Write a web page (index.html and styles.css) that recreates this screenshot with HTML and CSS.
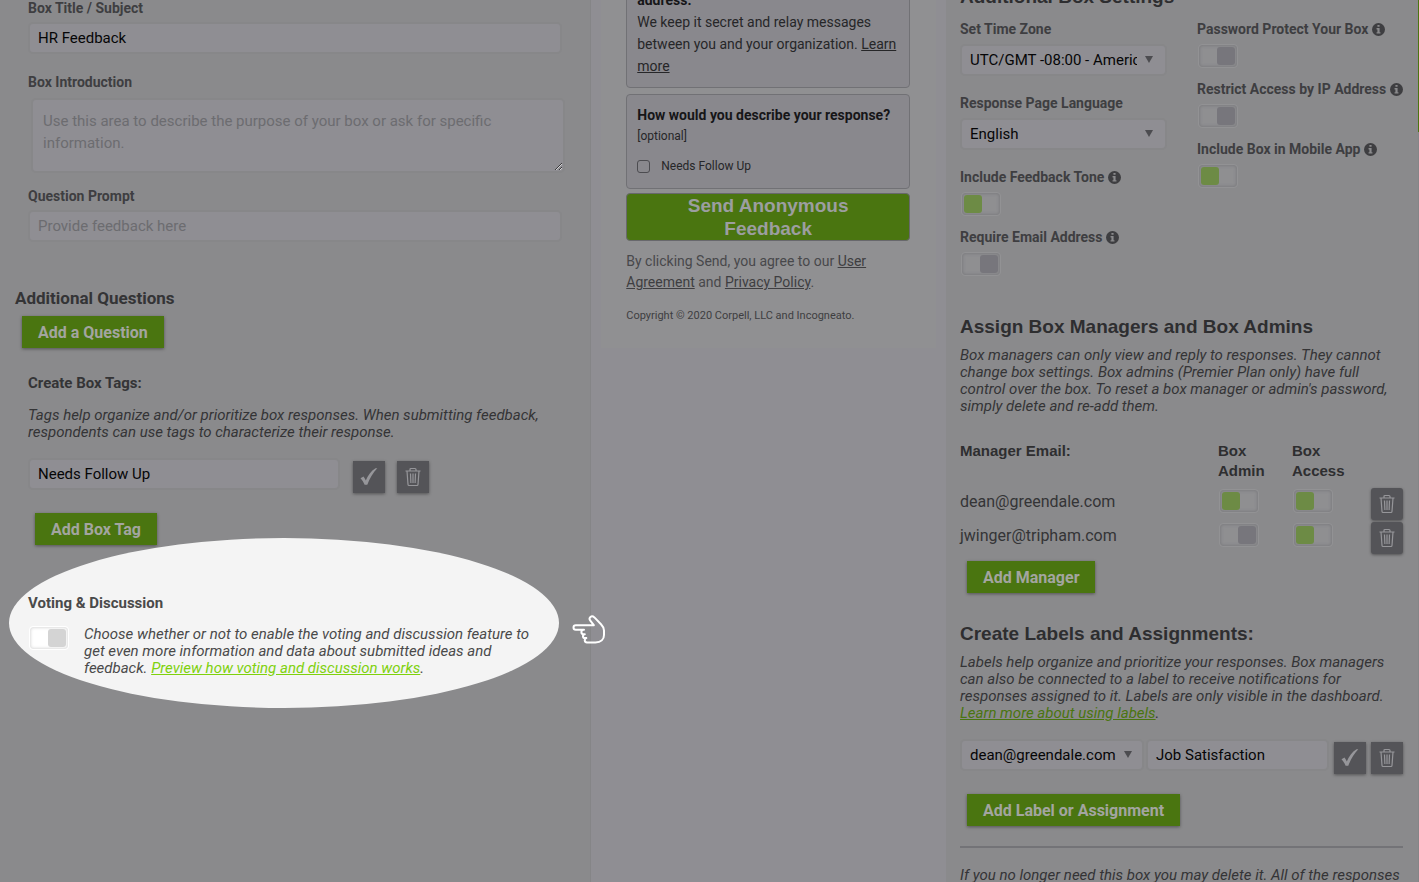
FILE: index.html
```html
<!DOCTYPE html>
<html lang="en">
<head>
    <meta charset="UTF-8">
    <meta name="viewport" content="width=device-width, initial-scale=1">
    <title>Edit Box</title>
    <link rel="stylesheet" href="styles.css">
</head>
<body>
<svg class="sprite" aria-hidden="true">
    <symbol id="icon-check" viewBox="0 0 20 20">
        <path d="M1.500 11.200l3-1.600c1 1.300 1.700 2.500 2.300 4C9 8.300 12 3.800 16.500 1.200h1.800C14 5.800 10.800 11 8.300 17.800H5.600C4.600 15.300 3.300 13.200 1.500 11.200z" fill="currentColor"/>
    </symbol>
    <symbol id="icon-trash" viewBox="0 0 20 20">
        <path d="M2.500 4h15M7 4V2.500q0-1 1-1h4q1 0 1 1V4M4 4l1 13.500q.1 1 1 1h8q.9 0 1-1L16 4M7.500 6.500l.4 9.500M10 6.500V16M12.500 6.500l-.4 9.500" fill="none" stroke="currentColor" stroke-width="1.200"/>
    </symbol>
    <symbol id="icon-info" viewBox="0 0 12 12">
        <circle cx="6" cy="6" r="6" fill="currentColor"/>
        <path d="M5 1.800h2v1.700H5zM4.200 4.700H7v3.800h.8v1.300H4.200V8.500H5V6h-.8z" fill="#8a8a8c"/>
    </symbol>
</svg>
<main class="editor">
    <section class="panel panel-box">
        <div class="field">
            <label class="label" for="box-title">Box Title / Subject</label>
            <input class="input" id="box-title" type="text" value="HR Feedback">
        </div>
        <div class="field field-intro">
            <label class="label" for="box-intro">Box Introduction</label>
            <textarea class="input textarea" id="box-intro" placeholder="Use this area to describe the purpose of your box or ask for specific information."></textarea>
        </div>
        <div class="field">
            <label class="label" for="box-prompt">Question Prompt</label>
            <input class="input" id="box-prompt" type="text" placeholder="Provide feedback here">
        </div>

        <h3 class="questions-title">Additional Questions</h3>
        <button class="btn btn-question" type="button">Add a Question</button>

        <div class="tags">
            <label class="label" for="box-tag">Create Box Tags:</label>
            <p class="help">Tags help organize and/or prioritize box responses. When submitting feedback, respondents can use tags to characterize their response.</p>
            <div class="tag-row">
                <input class="input" id="box-tag" type="text" value="Needs Follow Up">
                <button class="btn-icon" type="button" aria-label="Save tag"><svg><use href="#icon-check"/></svg></button>
                <button class="btn-icon" type="button" aria-label="Delete tag"><svg><use href="#icon-trash"/></svg></button>
            </div>
            <button class="btn" type="button">Add Box Tag</button>
        </div>

        <div class="voting">
            <label class="label" for="voting">Voting &amp; Discussion</label>
            <div class="voting-row">
                <input class="toggle toggle-bright" id="voting" type="checkbox">
                <p class="help">Choose whether or not to enable the voting and discussion feature to get even more information and data about submitted ideas and feedback. <a href="#preview">Preview how voting and discussion works</a>.</p>
            </div>
            <svg class="pointer" viewBox="0 0 34 30" aria-hidden="true">
                <path d="M13.500 10.200H3.800a2.300 2.300 0 0 0 0 4.600H12M12 14.800h-.4a2 2 0 0 0 0 4.400h1.200M12.800 19.200a1.900 1.900 0 0 0 .3 3.900h1.200M14.300 23.100a2.200 2.200 0 0 0 .6 4.300h8.600c5.500 0 8.500-3 8.500-7.400v-4.600c0-2.600-1.200-4.300-3-6.200l-6.600-6.800c-3-2.700-6.200.5-4.100 3.300l3.500 4.500H13.500" fill="none" stroke="#fff" stroke-width="2" stroke-linecap="round" stroke-linejoin="round"/>
            </svg>
        </div>
    </section>

    <section class="preview">
        <div class="preview-page">
            <div class="card card-relay">
                <b>address.</b><br>
                We keep it secret and relay messages between you and your organization. <a href="#learn">Learn more</a>
            </div>
            <div class="card card-tags">
                <b>How would you describe your response?</b>
                <small>[optional]</small>
                <label class="check"><input type="checkbox">Needs Follow Up</label>
            </div>
            <button class="send" type="button">Send Anonymous Feedback</button>
            <p class="terms">By clicking Send, you agree to our <a href="#agreement">User Agreement</a> and <a href="#privacy">Privacy Policy</a>.</p>
            <p class="copyright">Copyright © 2020 Corpell, LLC and Incogneato.</p>
        </div>
    </section>

    <section class="panel panel-settings">
        <h2>Additional Box Settings</h2>
        <div class="settings">
            <div>
                <div class="setting setting-select">
                    <label class="label" for="timezone">Set Time Zone</label>
                    <div class="select"><select class="input" id="timezone"><option>UTC/GMT -08:00 - America/Los_Angeles</option></select></div>
                </div>
                <div class="setting setting-select">
                    <label class="label" for="language">Response Page Language</label>
                    <div class="select"><select class="input" id="language"><option>English</option></select></div>
                </div>
                <div class="setting">
                    <label class="label" for="tone">Include Feedback Tone <svg class="info"><use href="#icon-info"/></svg></label>
                    <input class="toggle" id="tone" type="checkbox" checked>
                </div>
                <div class="setting">
                    <label class="label" for="email">Require Email Address <svg class="info"><use href="#icon-info"/></svg></label>
                    <input class="toggle" id="email" type="checkbox">
                </div>
            </div>
            <div>
                <div class="setting">
                    <label class="label" for="password">Password Protect Your Box <svg class="info"><use href="#icon-info"/></svg></label>
                    <input class="toggle" id="password" type="checkbox">
                </div>
                <div class="setting">
                    <label class="label" for="ip">Restrict Access by IP Address <svg class="info"><use href="#icon-info"/></svg></label>
                    <input class="toggle" id="ip" type="checkbox">
                </div>
                <div class="setting">
                    <label class="label" for="mobile">Include Box in Mobile App <svg class="info"><use href="#icon-info"/></svg></label>
                    <input class="toggle" id="mobile" type="checkbox" checked>
                </div>
            </div>
        </div>

        <h2>Assign Box Managers and Box Admins</h2>
        <p class="help">Box managers can only view and reply to responses. They cannot change box settings. Box admins (Premier Plan only) have full control over the box. To reset a box manager or admin's password, simply delete and re-add them.</p>
        <table class="managers">
            <thead>
                <tr><th>Manager Email:</th><th class="col-toggle">Box Admin</th><th class="col-toggle">Box Access</th><td class="col-delete"></td></tr>
            </thead>
            <tbody>
                <tr>
                    <td>dean@greendale.com</td>
                    <td><input class="toggle" type="checkbox" aria-label="dean box admin" checked></td>
                    <td><input class="toggle" type="checkbox" aria-label="dean box access" checked></td>
                    <td class="col-delete"><button class="btn-icon rounded" type="button" aria-label="Delete dean"><svg><use href="#icon-trash"/></svg></button></td>
                </tr>
                <tr>
                    <td>jwinger@tripham.com</td>
                    <td><input class="toggle" type="checkbox" aria-label="jwinger box admin"></td>
                    <td><input class="toggle" type="checkbox" aria-label="jwinger box access" checked></td>
                    <td class="col-delete"><button class="btn-icon rounded" type="button" aria-label="Delete jwinger"><svg><use href="#icon-trash"/></svg></button></td>
                </tr>
            </tbody>
        </table>
        <button class="btn" type="button">Add Manager</button>

        <h2 class="labels-title">Create Labels and Assignments:</h2>
        <p class="help">Labels help organize and prioritize your responses. Box managers can also be connected to a label to receive notifications for responses assigned to it. Labels are only visible in the dashboard. <a href="#labels">Learn more about using labels</a>.</p>
        <div class="label-row">
            <div class="select"><select class="input" aria-label="Manager"><option>dean@greendale.com</option></select></div>
            <input class="input" type="text" value="Job Satisfaction" aria-label="Label">
            <button class="btn-icon" type="button" aria-label="Save label"><svg><use href="#icon-check"/></svg></button>
            <button class="btn-icon" type="button" aria-label="Delete label"><svg><use href="#icon-trash"/></svg></button>
        </div>
        <button class="btn" type="button">Add Label or Assignment</button>
        <hr>
        <p class="help">If you no longer need this box you may delete it. All of the responses</p>
    </section>
</main>
</body>
</html>
```
FILE: styles.css
```css
*{
    box-sizing: border-box;
}
body{
    margin: 0;
    font-family: Roboto, "Liberation Sans", sans-serif;
    font-size: 15px;
    line-height: 17px;
    color: #343436;
    background: #8f8e93;
}
h2, h3, p{
    margin: 0;
}
input, select, textarea, button{
    font: inherit;
    margin: 0;
}
.sprite{
    display: none;
}

.editor{
    display: grid;
    grid-template-columns: minmax(0, 5fr) minmax(0, 3fr) minmax(0, 4fr);
    height: 100vh;
    overflow: hidden;
}
.panel{
    background: #8a8a8c;
}
.panel-box{
    padding: 0 28px;
    border-right: 1px solid #858587;
}

/* form controls */
.label{
    display: block;
    font-size: 15px;
    font-weight: 700;
    line-height: 16px;
}
.input{
    display: block;
    width: 100%;
    height: 32px;
    padding: 0 8px;
    font-size: 15px;
    color: #060607;
    background: #8f8e93;
    border: 2px solid #878789;
    border-radius: 5px;
}
.input::placeholder{
    color: #6c6c70;
    opacity: 1;
}
.field .label, .setting .label{
    font-size: 14px;
    color: #3e3e41;
}
.field .label{
    margin-bottom: 6px;
}
.field-intro{
    margin: 20px 0 15px;
}
.field-intro .label{
    margin-bottom: 8px;
}
.field .textarea{
    height: 75px;
    margin-left: 3px;
    padding: 10px;
    line-height: 22px;
    resize: both;
}
.select{
    position: relative;
}
.select .input{
    appearance: none;
    padding-right: 28px;
}
.select::after{
    content: "";
    position: absolute;
    top: 12px;
    right: 14px;
    border: 4px solid transparent;
    border-top: 7px solid #4c4c50;
    border-bottom: 0;
}
.toggle{
    appearance: none;
    display: block;
    position: relative;
    width: 40px;
    height: 24px;
    margin-left: 1px;
    background: #8f8f91;
    border: 1px solid #929294;
    border-radius: 4px;
    box-shadow: inset 0 0 3px 1px #7d7d80;
}
.toggle::before{
    content: "";
    position: absolute;
    top: 2px;
    right: 2px;
    width: 18px;
    height: 18px;
    background: #77767c;
    border-radius: 3px;
}
.toggle:checked::before{
    right: 18px;
    background: #6d8b45;
}
.toggle-bright{
    background: #fff;
    border-color: #fff;
    box-shadow: inset 0 0 3px 1px #ddd;
}
.toggle-bright::before{
    background: #d4d4d4;
}

.btn{
    display: block;
    height: 32px;
    margin-left: 7px;
    padding: 0 16px;
    font-size: 16px;
    font-weight: 700;
    color: #a3a5a0;
    background: #4a7510;
    border: 0;
    box-shadow: 0 1px 3px rgba(0, 0, 0, .4);
}
.btn-icon{
    display: flex;
    align-items: center;
    justify-content: center;
    flex: none;
    width: 32px;
    height: 32px;
    padding: 0;
    color: #96969a;
    background: #545458;
    border: 0;
    box-shadow: 0 1px 3px rgba(0, 0, 0, .4);
}
.btn-icon svg{
    width: 20px;
    height: 20px;
}
.rounded{
    border-radius: 3px;
}
.help{
    font-size: 15px;
    font-style: italic;
    line-height: 17px;
}
.help a{
    color: #4a7510;
}

/* left column */
.questions-title{
    margin: 46px 0 8px -13px;
    font-size: 17px;
    font-weight: 700;
    line-height: 20px;
}
.btn-question{
    margin-left: -6px;
}
.tags{
    margin-top: 27px;
}
.tags .help{
    margin: 16px 0 17px;
}
.tag-row{
    display: flex;
    align-items: flex-end;
    gap: 12px;
    margin-bottom: 20px;
}
.tag-row .input{
    width: 312px;
    margin: 0 1px 3px 0;
}
.voting{
    position: relative;
    margin-top: 50px;
}
.voting::before{
    content: "";
    position: absolute;
    top: -57px;
    left: -19px;
    width: 550px;
    height: 170px;
    background: #f4f4f4;
    border-radius: 50%;
}
.voting .label{
    position: relative;
    color: #4a4a4a;
}
.voting-row{
    display: flex;
    position: relative;
    gap: 15px;
    margin-top: 15px;
    color: #4a4a4a;
}
.voting-row .toggle{
    flex: none;
}
.voting-row .help{
    max-width: 460px;
}
.voting-row a{
    color: #7fd10d;
}
.pointer{
    position: absolute;
    top: 20px;
    left: 544px;
    width: 34px;
    height: 30px;
}

/* response page preview */
.preview-page{
    margin: -61px 10px 0;
    padding: 0 26px 24px 25px;
    font-size: 14px;
    background: #909092;
}
.card{
    padding: 10px;
    line-height: 22px;
    color: #262628;
    background: #89888d;
    border: 1px solid #717175;
    border-radius: 4px;
}
.card b{
    color: #161618;
}
.card a{
    color: #262628;
}
.card-relay{
    padding-top: 49px;
    margin-bottom: 6px;
}
.card-tags{
    padding-top: 9px;
}
.card-tags small{
    display: block;
    font-size: 12px;
    line-height: 20px;
}
.check{
    display: flex;
    align-items: center;
    gap: 11px;
    margin: 9px 0 1px;
    font-size: 12px;
}
.check input{
    appearance: none;
    width: 13px;
    height: 13px;
    border: 1px solid #4c4c50;
    border-radius: 3px;
}
.send{
    display: block;
    width: 100%;
    height: 48px;
    margin-top: 4px;
    padding: 0 48px;
    font: bold 19px/23px "Liberation Sans", Arial, sans-serif;
    color: #9c9ea0;
    background: #4a7510;
    border: 1px solid #68686c;
    border-radius: 4px;
}
.terms{
    margin: 10px 0 14px;
    line-height: 21px;
    color: #48484b;
}
.terms a{
    color: #3e3e41;
}
.copyright{
    font-size: 11px;
    color: #3e3e41;
}

/* right column */
.panel-settings{
    position: relative;
    padding: 0 15px 0 14px;
    border-right: 1px solid #858587;
}
.panel-settings::after{
    content: "";
    position: absolute;
    top: 0;
    right: -1px;
    width: 1px;
    height: 132px;
    background: #4a7510;
}
.panel-settings h2{
    font: bold 19px/24px "Liberation Sans", Arial, sans-serif;
    color: #2e2e30;
}
.panel-settings h2:first-child{
    margin-top: -15px;
}
.settings{
    display: grid;
    grid-template-columns: 207px 1fr;
    gap: 30px;
    margin: 12px 0 26px;
}
.setting{
    margin-bottom: 20px;
}
.setting .label{
    margin-bottom: 7px;
    white-space: nowrap;
}
.setting-select{
    margin-bottom: 19px;
}
.setting .toggle{
    margin-bottom: -7px;
}
.info{
    width: 13px;
    height: 13px;
    vertical-align: -2px;
}
.panel-settings h2 + .help{
    margin-top: 8px;
}
.managers{
    width: 100%;
    margin: 26px 0 9px;
    border-collapse: collapse;
    table-layout: fixed;
    font-size: 16px;
}
.managers th{
    padding: 0 0 3px;
    font: bold 15px/20px "Liberation Sans", Arial, sans-serif;
    color: #2e2e30;
    text-align: left;
    vertical-align: top;
}
.managers td{
    height: 34px;
    padding: 0;
}
.managers .col-toggle{
    width: 74px;
    padding-right: 20px;
}
.managers .col-delete{
    width: 37px;
}
.col-delete .btn-icon{
    margin: 4px 0 -2px auto;
}
.labels-title{
    margin-top: 29px;
}
.label-row{
    display: flex;
    align-items: flex-end;
    gap: 5px;
    margin: 17px 0 20px;
}
.label-row .select{
    flex: none;
    width: 184px;
    margin: 0 -3px 3px 0;
}
.label-row .select .input{
    padding-right: 20px;
}
.label-row > .input{
    flex: 1;
    min-width: 0;
    margin-bottom: 3px;
}
.label-row .select::after{
    right: 12px;
}
hr{
    margin: 20px 0 19px;
    border: 0;
    border-top: 2px solid #737377;
}
```
